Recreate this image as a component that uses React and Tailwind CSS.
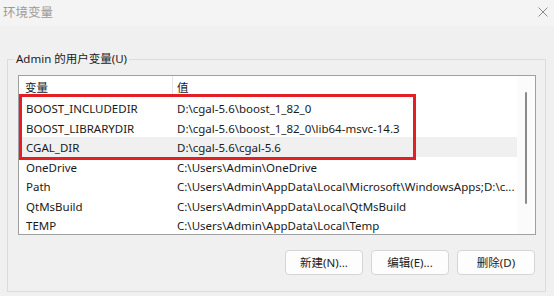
import React from "react";

const rows = [
  ["BOOST_INCLUDEDIR", "D:\\cgal-5.6\\boost_1_82_0", false],
  ["BOOST_LIBRARYDIR", "D:\\cgal-5.6\\boost_1_82_0\\lib64-msvc-14.3", false],
  ["CGAL_DIR", "D:\\cgal-5.6\\cgal-5.6", true],
  ["OneDrive", "C:\\Users\\Admin\\OneDrive", false],
  ["Path", "C:\\Users\\Admin\\AppData\\Local\\Microsoft\\WindowsApps;D:\\c...", false],
  ["QtMsBuild", "C:\\Users\\Admin\\AppData\\Local\\QtMsBuild", false],
  ["TEMP", "C:\\Users\\Admin\\AppData\\Local\\Temp", false],
];

const font = { fontFamily: '"Noto Sans", "Noto Sans CJK SC", sans-serif' };

export default function App() {
  return (
    <div
      className="w-[554px] h-[296px] bg-[#f0f0f0] flex flex-col overflow-hidden text-[11.5px] text-[#1a1a1a]"
      style={font}
    >
      {/* title bar */}
      <div className="h-[26px] bg-[#f4f4f4] flex items-center justify-between pl-[3px] pr-[6px] shrink-0">
        <span className="text-[12.5px] text-[#9a9a9a] leading-none">环境变量</span>
        <svg width="10" height="10" viewBox="0 0 10 10" className="mb-[2px]">
          <path d="M0.5 0.5 L9.5 9.5 M9.5 0.5 L0.5 9.5" stroke="#8c8c8c" strokeWidth="1" fill="none" />
        </svg>
      </div>

      {/* group box */}
      <div className="relative mt-[33px] ml-[7px] mr-[8px] mb-[4px] flex-1 border border-[#dcdcdc] flex flex-col">
        <span className="absolute -top-[9px] left-[6px] px-[2px] bg-[#f0f0f0] leading-[16px]">
          Admin 的用户变量(U)
        </span>

        {/* list */}
        <div className="relative mt-[15px] ml-[10px] mr-[9px] h-[160px] border border-[#a0a0a0] bg-white flex overflow-hidden">
          <div className="flex-1 flex flex-col min-w-0">
            <div className="h-[22px] flex items-stretch shrink-0">
              <div className="w-[154px] pl-[6px] pt-[1px] flex items-center border-r border-[#e5e5e5]">变量</div>
              <div className="pl-[4px] pt-[1px] flex items-center">值</div>
            </div>
            {rows.map(([n, v, hl]) => (
              <div
                key={n}
                className={
                  "h-[19.5px] flex items-center shrink-0 whitespace-nowrap pt-[2px] " +
                  (hl ? "bg-[#f0f0f0]" : "")
                }
              >
                <div className="w-[155px] pl-[7px]">{n}</div>
                <div className="pl-[3px] flex-1 overflow-hidden">{v}</div>
              </div>
            ))}
          </div>
          <div className="w-[18px] shrink-0 bg-[#fbfbfb] flex justify-center">
            <div className="mt-[16px] w-[2px] h-[112px] rounded-full bg-[#8a8a8a]" />
          </div>

          {/* highlight box */}
          <div className="absolute left-0 top-[18px] w-[397px] h-[66px] border-[3px] border-[#e31e24] pointer-events-none" />
        </div>

        {/* buttons */}
        <div className="mt-[15px] mr-[10px] flex justify-end gap-[8px]">
          {["新建(N)...", "编辑(E)...", "删除(D)"].map((t) => (
            <button
              key={t}
              className="w-[78px] h-[25px] rounded-[4px] border border-[#d5d5d5] bg-[#fdfdfd] text-[11.5px] text-[#1a1a1a] flex items-center justify-center"
              style={font}
            >
              {t}
            </button>
          ))}
        </div>
      </div>
    </div>
  );
}
